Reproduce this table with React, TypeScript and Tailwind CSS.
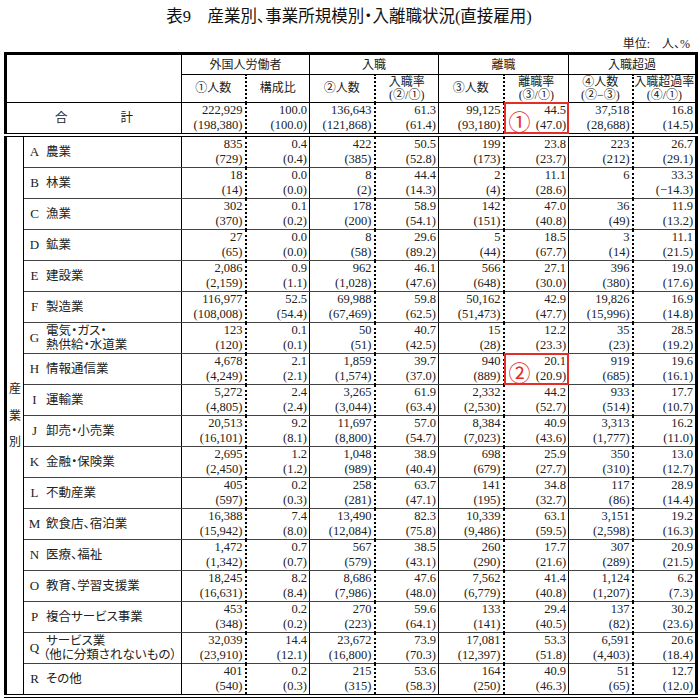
import React from "react";

type Row = { k: string; n: string[]; a: string; b: string; mark?: string };

const total = {
  a: "222,929 100.0 136,643 61.3 99,125 44.5 37,518 16.8",
  b: "198,380 100.0 121,868 61.4 93,180 47.0 28,688 14.5",
};

const rows: Row[] = [
  { k: "A", n: ["農業"], a: "835 0.4 422 50.5 199 23.8 223 26.7", b: "729 0.4 385 52.8 173 23.7 212 29.1" },
  { k: "B", n: ["林業"], a: "18 0.0 8 44.4 2 11.1 6 33.3", b: "14 0.0 2 14.3 4 28.6 - −14.3" },
  { k: "C", n: ["漁業"], a: "302 0.1 178 58.9 142 47.0 36 11.9", b: "370 0.2 200 54.1 151 40.8 49 13.2" },
  { k: "D", n: ["鉱業"], a: "27 0.0 8 29.6 5 18.5 3 11.1", b: "65 0.0 58 89.2 44 67.7 14 21.5" },
  { k: "E", n: ["建設業"], a: "2,086 0.9 962 46.1 566 27.1 396 19.0", b: "2,159 1.1 1,028 47.6 648 30.0 380 17.6" },
  { k: "F", n: ["製造業"], a: "116,977 52.5 69,988 59.8 50,162 42.9 19,826 16.9", b: "108,008 54.4 67,469 62.5 51,473 47.7 15,996 14.8" },
  { k: "G", n: ["電気・ガス・", "熱供給・水道業"], a: "123 0.1 50 40.7 15 12.2 35 28.5", b: "120 0.1 51 42.5 28 23.3 23 19.2" },
  { k: "H", n: ["情報通信業"], a: "4,678 2.1 1,859 39.7 940 20.1 919 19.6", b: "4,249 2.1 1,574 37.0 889 20.9 685 16.1", mark: "②" },
  { k: "I", n: ["運輸業"], a: "5,272 2.4 3,265 61.9 2,332 44.2 933 17.7", b: "4,805 2.4 3,044 63.4 2,530 52.7 514 10.7" },
  { k: "J", n: ["卸売・小売業"], a: "20,513 9.2 11,697 57.0 8,384 40.9 3,313 16.2", b: "16,101 8.1 8,800 54.7 7,023 43.6 1,777 11.0" },
  { k: "K", n: ["金融・保険業"], a: "2,695 1.2 1,048 38.9 698 25.9 350 13.0", b: "2,450 1.2 989 40.4 679 27.7 310 12.7" },
  { k: "L", n: ["不動産業"], a: "405 0.2 258 63.7 141 34.8 117 28.9", b: "597 0.3 281 47.1 195 32.7 86 14.4" },
  { k: "M", n: ["飲食店、宿泊業"], a: "16,388 7.4 13,490 82.3 10,339 63.1 3,151 19.2", b: "15,942 8.0 12,084 75.8 9,486 59.5 2,598 16.3" },
  { k: "N", n: ["医療、福祉"], a: "1,472 0.7 567 38.5 260 17.7 307 20.9", b: "1,342 0.7 579 43.1 290 21.6 289 21.5" },
  { k: "O", n: ["教育、学習支援業"], a: "18,245 8.2 8,686 47.6 7,562 41.4 1,124 6.2", b: "16,631 8.4 7,986 48.0 6,779 40.8 1,207 7.3" },
  { k: "P", n: ["複合サービス事業"], a: "453 0.2 270 59.6 133 29.4 137 30.2", b: "348 0.2 223 64.1 141 40.5 82 23.6" },
  { k: "Q", n: ["サービス業", "（他に分類されないもの）"], a: "32,039 14.4 23,672 73.9 17,081 53.3 6,591 20.6", b: "23,910 12.1 16,800 70.3 12,397 51.8 4,403 18.4" },
  { k: "R", n: ["その他"], a: "401 0.2 215 53.6 164 40.9 51 12.7", b: "540 0.3 315 58.3 250 46.3 65 12.0" },
];

// right edge of each data column: dotted inside a group, solid between groups
const colBorder = (i: number) =>
  i === 7 ? "" : i % 2 === 0 ? "border-r-2 [border-right-style:dotted] border-r-black" : "border-r border-r-black";

function Mark({ c }: { c: string }) {
  return (
    <div className="pointer-events-none absolute -inset-px border-2 border-[#e52d27]">
      <span className="absolute left-[3px] top-[5px] font-['Noto_Sans_CJK_JP'] text-[22px] leading-none text-[#e52d27]">{c}</span>
    </div>
  );
}

function DataCells({ a, b, last, mark }: { a: string; b: string; last?: boolean; mark?: string }) {
  const top = a.split(" ");
  const bot = b.split(" ");
  const bottom = last ? "border-b-4 border-double border-b-black" : "border-b border-b-[#444]";
  return (
    <>
      {top.map((v, i) => (
        <td key={i} className={`relative p-0 align-middle ${colBorder(i)} ${bottom}`}>
          <div className="flex flex-col items-end pr-[2px] leading-[15px]">
            <span>{v}</span>
            <span>{bot[i] === "-" ? "\u00a0" : `(${bot[i]})`}</span>
          </div>
          {mark && i === 5 && <Mark c={mark} />}
        </td>
      ))}
    </>
  );
}

const groups = ["外国人労働者", "入職", "離職", "入職超過"];
const subs: string[][] = [["①人数"], ["構成比"], ["②人数"], ["入職率", "(②/①)"], ["③人数"], ["離職率", "(③/①)"], ["④人数", "(②−③)"], ["入職超過率", "(④/①)"]];

export default function App() {
  return (
    <div className="h-[698px] w-[698px] overflow-hidden bg-white font-['Liberation_Serif','Noto_Sans_CJK_JP',serif] text-[#222] [font-feature-settings:'palt']">
      <div className="pt-[7px] text-center text-[16.5px] leading-[20px] text-[#111]">表9　産業別、事業所規模別・入離職状況(直接雇用)</div>
      <div className="mt-[10px] pr-[8px] text-right text-[12px] leading-[14px]">単位:　人、%</div>
      <table className="ml-[4px] mt-px w-[691px] table-fixed border-collapse border-[3px] border-black text-[12.5px]">
        <colgroup>
          <col className="w-[18px]" />
          <col className="w-[158px]" />
          <col className="w-[64px]" />
          <col className="w-[64px]" />
          <col className="w-[65px]" />
          <col className="w-[64px]" />
          <col className="w-[65px]" />
          <col className="w-[65px]" />
          <col className="w-[64px]" />
          <col className="w-[64px]" />
        </colgroup>
        <thead>
          <tr className="h-[21px]">
            <td rowSpan={2} colSpan={2} className="border-r border-b border-black p-0" />
            {groups.map((g, i) => (
              <td key={g} colSpan={2} className={`border-b border-b-black p-0 text-center text-[12px] leading-[14px] ${i < 3 ? "border-r border-r-black" : ""}`}>
                {g}
              </td>
            ))}
          </tr>
          <tr className="h-[28px]">
            {subs.map((s, i) => (
              <td key={i} className={`border-b border-b-black p-0 text-center text-[12px] leading-[12.5px] whitespace-nowrap ${colBorder(i)}`}>
                {s.map((t) => (
                  <div key={t}>{t}</div>
                ))}
              </td>
            ))}
          </tr>
        </thead>
        <tbody>
          <tr className="h-[30px]">
            <td colSpan={2} className="border-r border-r-black border-b-4 border-double border-b-black p-0">
              <div className="flex justify-center gap-[53px] text-[12.5px]">
                <span>合</span>
                <span>計</span>
              </div>
            </td>
            <DataCells a={total.a} b={total.b} last mark="①" />
          </tr>
          {rows.map((r, ri) => {
            const last = ri === rows.length - 1;
            return (
              <tr key={r.k} className="h-[31px]">
                {ri === 0 && (
                  <td rowSpan={rows.length} className="border-r border-r-black border-b-4 border-double border-b-black p-0">
                    <div className="flex flex-col items-center gap-[12.5px] text-[12px] leading-[14px]">
                      <span>産</span>
                      <span>業</span>
                      <span>別</span>
                    </div>
                  </td>
                )}
                <td className={`border-r border-r-black p-0 ${last ? "border-b-4 border-double border-b-black" : "border-b border-b-[#444]"}`}>
                  <div className="flex items-center pl-[4px]">
                    <span className="w-[13px] text-center text-[13px]">{r.k}</span>
                    <div className="ml-[5px] flex flex-col whitespace-nowrap leading-[14px]">
                      {r.n.map((t, i) => (
                        <span key={t} className={i === 1 && r.k === "Q" ? "-ml-[3px]" : ""}>
                          {t}
                        </span>
                      ))}
                    </div>
                  </div>
                </td>
                <DataCells a={r.a} b={r.b} last={last} mark={r.mark} />
              </tr>
            );
          })}
          <tr className="h-[24px]">
            <td className="border-r border-r-black p-0" />
            <td className="border-r border-r-black p-0" />
            {Array.from({ length: 8 }, (_, i) => (
              <td key={i} className={`p-0 ${colBorder(i)}`} />
            ))}
          </tr>
        </tbody>
      </table>
    </div>
  );
}
